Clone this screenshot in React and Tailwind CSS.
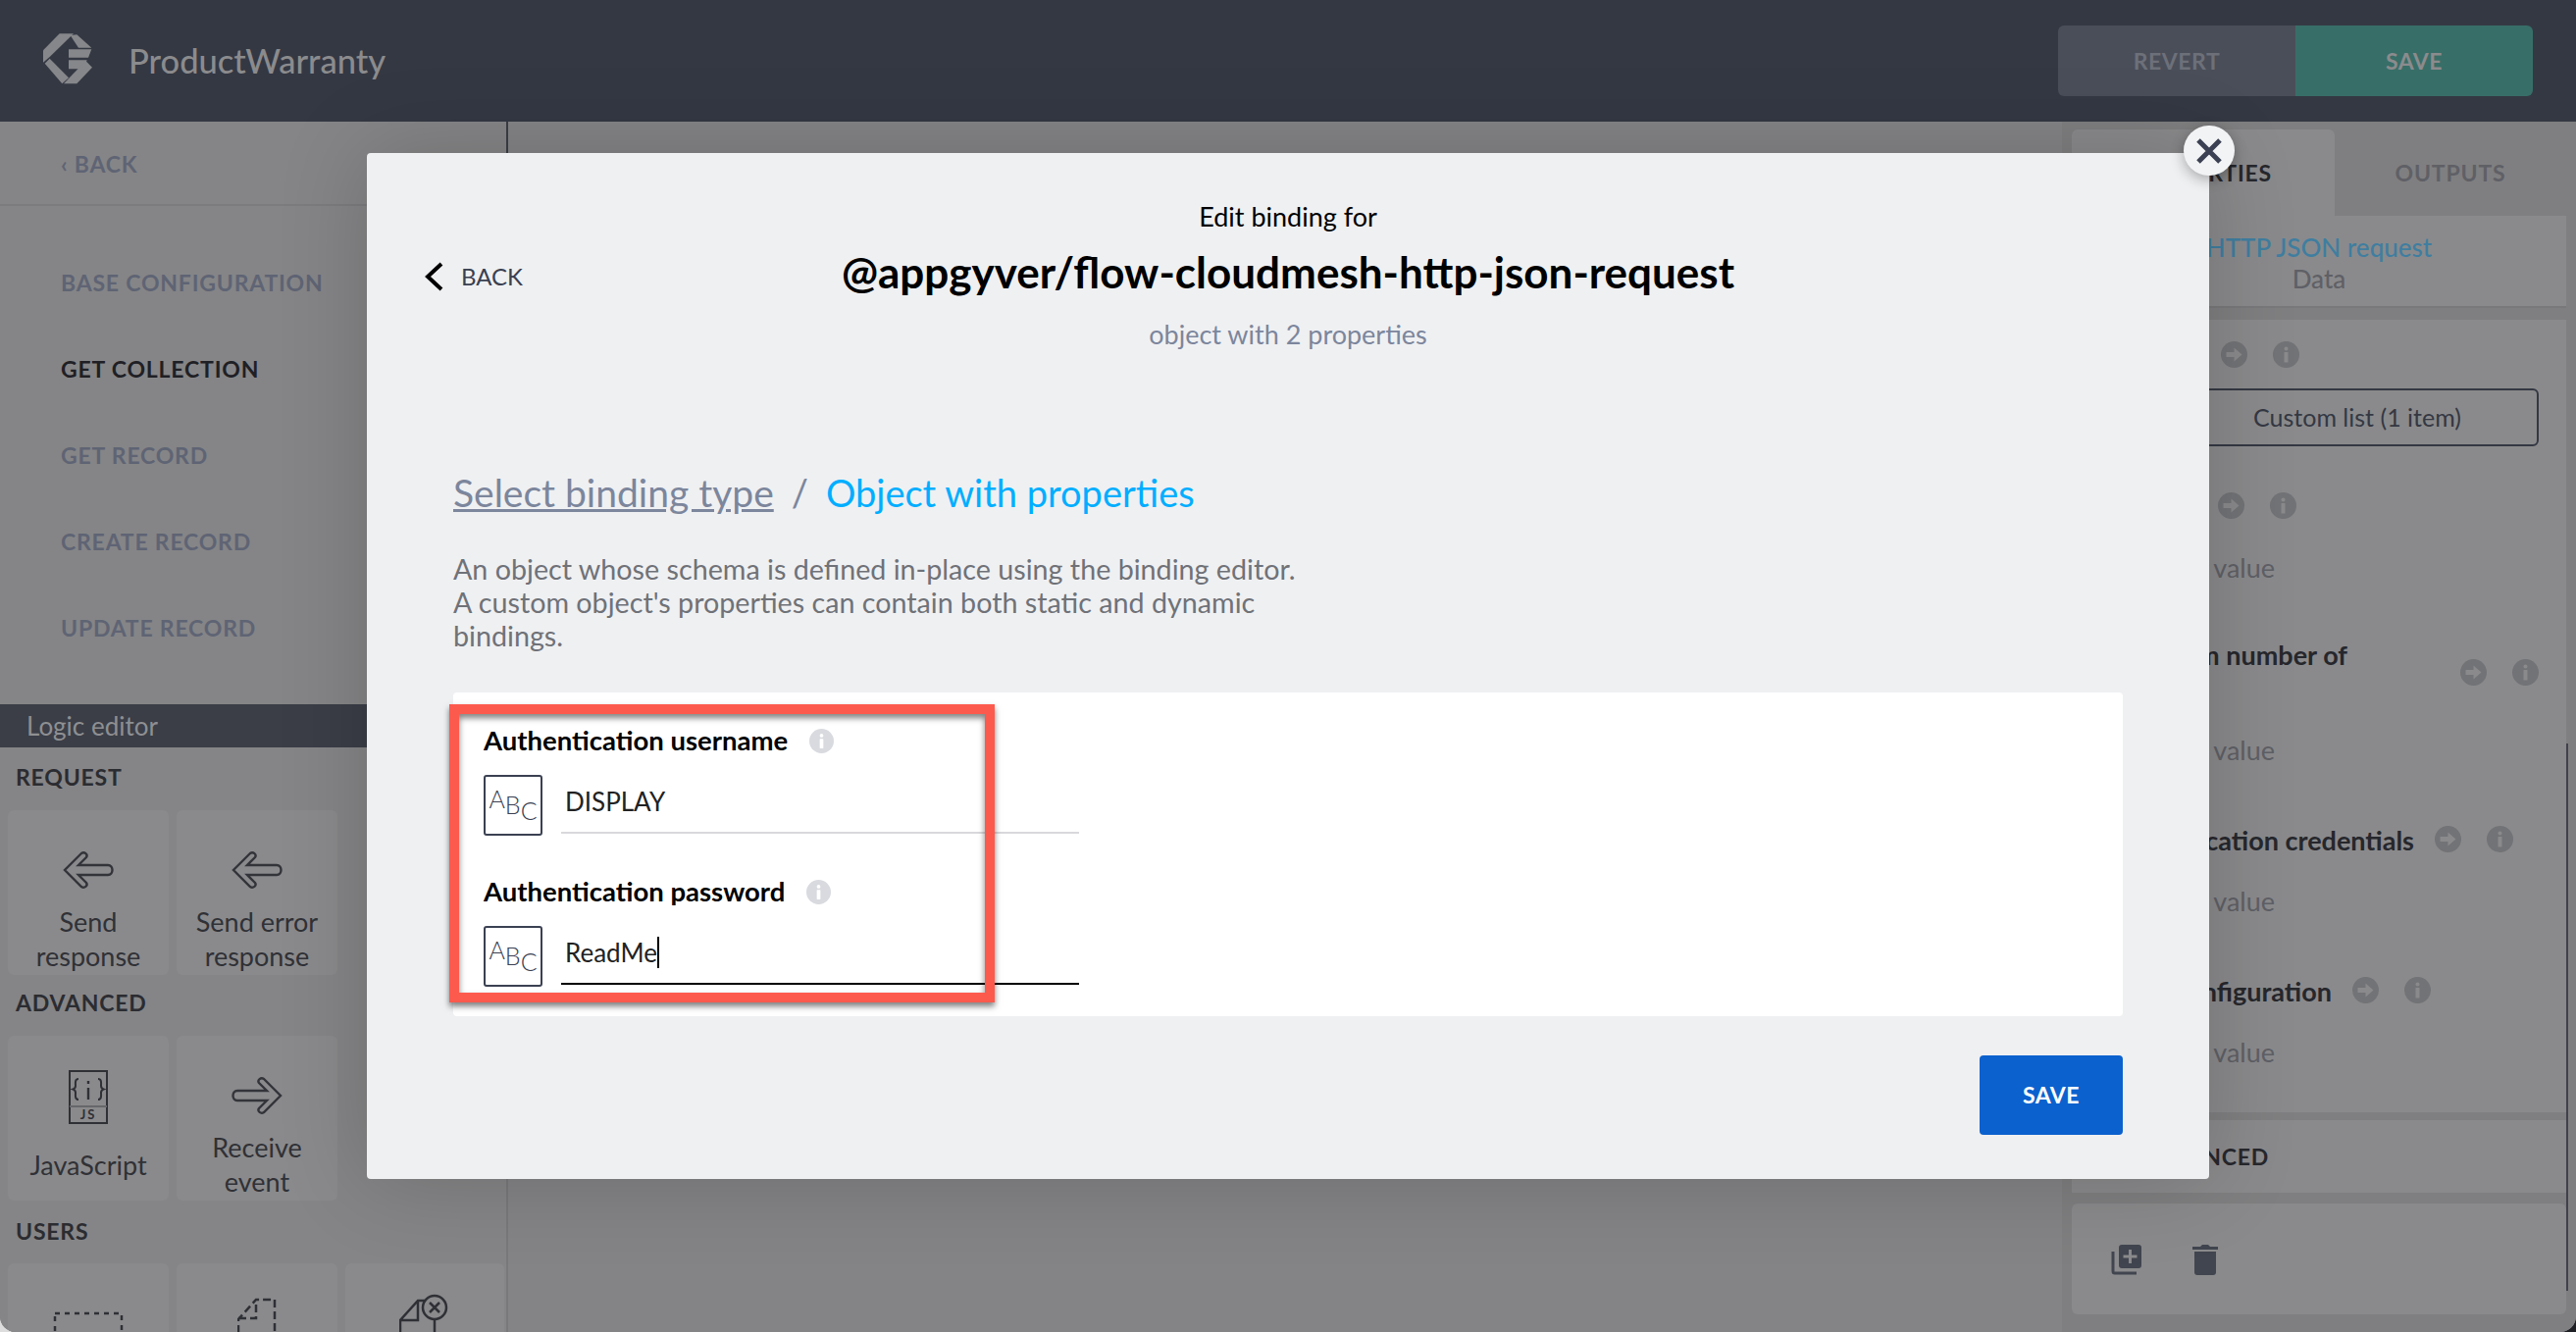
import React from 'react';

function Logo() {
    return (
        <svg width="80" height="80" viewBox="0 0 240 240" fill="#86878a">
            <polygon points="42,88 92,37 135,37 62,108 42,125" />
            <polygon points="125,42 145,40 190,80 150,80" />
            <polygon points="120,85 190,85 180,110 120,110" />
            <polygon points="120,118 176,118 166,145 120,145" />
            <polygon points="172,120 192,140 145,190 105,190" />
            <polygon points="47,128 62,113 120,172 100,190" />
        </svg>
    );
}

function InfoIcon({ bg = '#727376', fg = '#8a8a8c', size = 27 }) {
    return (
        <svg width={size} height={size} viewBox="0 0 27 27" className="shrink-0">
            <circle cx="13.5" cy="13.5" r="13.5" fill={bg} />
            <circle cx="13.5" cy="7.5" r="2" fill={fg} />
            <rect x="11.5" y="11" width="4" height="10.5" rx="0.5" fill={fg} />
        </svg>
    );
}

function ArrowCircle() {
    return (
        <svg width="27" height="27" viewBox="0 0 27 27" className="shrink-0">
            <circle cx="13.5" cy="13.5" r="13.5" fill="#727376" />
            <path d="M5.5 11h8V6.5l8 7-8 7V16h-8z" fill="#8a8a8c" />
        </svg>
    );
}

function OutlineArrow({ flip }) {
    return (
        <svg width="54" height="40" viewBox="0 0 54 40" fill="none" stroke="#33343a" strokeWidth="2.4" className={flip ? '-scale-x-100' : ''}>
            <path d="M20 3 L3 20 L20 37 C23 39 27 36 25 33 L17 25 H47 C53 25 53 15 47 15 H17 L25 7 C27 4 23 1 20 3 Z" />
        </svg>
    );
}

function JsIcon() {
    return (
        <svg width="40" height="55" viewBox="0 0 40 55" fill="none" stroke="#2f3036">
            <rect x="1" y="1" width="38" height="53" strokeWidth="2" />
            <line x1="1" y1="37" x2="39" y2="37" stroke="#66676b" strokeWidth="2" />
            <path d="M10 9 C6 9 7 14 7 16 C7 18 6 19 4.5 19.5 C6 20 7 21 7 23 C7 25 6 30 10 30 M30 9 C34 9 33 14 33 16 C33 18 34 19 35.5 19.5 C34 20 33 21 33 23 C33 25 34 30 30 30" strokeWidth="2" />
            <line x1="20" y1="18" x2="20" y2="30" strokeWidth="2.4" />
            <line x1="20" y1="11" x2="20" y2="14" strokeWidth="2.4" />
            <text x="20" y="50" textAnchor="middle" fill="#2f3036" stroke="none" fontSize="13" fontWeight="700" letterSpacing="2" fontFamily="Lato, sans-serif">JS</text>
        </svg>
    );
}

function PaletteCard({ children, className = 'w-[164px]', pad = 'pt-[41px]' }) {
    return (
        <div className={`${className} ${pad} shrink-0 h-[168px] rounded-md bg-[#8a8a8c] flex flex-col items-center text-center`}>
            {children}
        </div>
    );
}

function CardLabel({ lines, className = 'mt-[15px]' }) {
    return (
        <div className={`${className} text-[27px] leading-[35px] text-[#303136]`}>
            {lines.map(l => <div key={l}>{l}</div>)}
        </div>
    );
}

function NavItem({ active, children }) {
    return (
        <div className={`h-[88px] flex items-center text-[23px] font-bold tracking-[0.8px] ${active ? 'text-[#1f2025]' : 'text-[#5f6474]'}`}>
            {children}
        </div>
    );
}

function Sidebar() {
    return (
        <div className="w-[518px] shrink-0 bg-[#858587] flex flex-col">
            <div className="border-r-2 border-[#3b3e47]">
                <div className="h-[86px] border-b-2 border-[#7c7c7f] pl-[62px] pt-[2px] flex items-center text-[23px] font-bold tracking-[0.8px] text-[#5f6474]">
                    ‹ BACK
                </div>
                <div className="h-[508px] overflow-hidden pl-[62px] pt-[34px]">
                    <NavItem>BASE CONFIGURATION</NavItem>
                    <NavItem active>GET COLLECTION</NavItem>
                    <NavItem>GET RECORD</NavItem>
                    <NavItem>CREATE RECORD</NavItem>
                    <NavItem>UPDATE RECORD</NavItem>
                    <NavItem>DELETE RECORD</NavItem>
                </div>
            </div>
            <div className="h-[44px] bg-[#3b3e47] pl-[27px] flex items-center text-[26px] text-[#8e8f92]">
                Logic editor
            </div>
            <div className="px-[8px] flex-1 overflow-hidden border-r-2 border-[#79797b]">
                <div className="h-[60px] mb-[4px] pl-[8px] flex items-center text-[23px] font-bold tracking-[0.8px] text-[#2b2c31]">REQUEST</div>
                <div className="flex gap-[8px]">
                    <PaletteCard>
                        <OutlineArrow />
                        <CardLabel lines={['Send', 'response']} />
                    </PaletteCard>
                    <PaletteCard>
                        <OutlineArrow />
                        <CardLabel lines={['Send error', 'response']} />
                    </PaletteCard>
                </div>
                <div className="h-[56px] mb-[6px] pl-[8px] flex items-center text-[23px] font-bold tracking-[0.8px] text-[#2b2c31]">ADVANCED</div>
                <div className="flex gap-[8px]">
                    <PaletteCard pad="pt-[35px]">
                        <JsIcon />
                        <CardLabel lines={['JavaScript']} className="mt-[24px]" />
                    </PaletteCard>
                    <PaletteCard>
                        <OutlineArrow flip />
                        <CardLabel lines={['Receive', 'event']} />
                    </PaletteCard>
                </div>
                <div className="h-[62px] mb-[2px] pl-[8px] flex items-center text-[23px] font-bold tracking-[0.8px] text-[#2b2c31]">USERS</div>
                <div className="flex gap-[8px]">
                    <PaletteCard pad="pt-[49px]">
                        <svg width="72" height="40" fill="none" stroke="#2f3036" strokeWidth="2.5" strokeDasharray="5 5">
                            <rect x="2" y="2" width="68" height="36" />
                        </svg>
                    </PaletteCard>
                    <PaletteCard pad="pt-[35px]">
                        <svg width="40" height="50" fill="none" stroke="#2f3036" strokeWidth="2.5" strokeDasharray="8 4">
                            <path d="M1 48 V22 L19 2 H38 V48" />
                            <path d="M1 21 H19 V2" />
                        </svg>
                    </PaletteCard>
                    <PaletteCard className="w-[162px]" pad="pt-[31px]">
                        <svg width="50" height="54" fill="none" stroke="#2f3036" strokeWidth="2.5" className="ml-[-2px]">
                            <path d="M1 54 V27 L19 7 H26 M19 7 V27 H1" />
                            <circle cx="36" cy="14" r="12" />
                            <path d="M31 9l10 10M41 9l-10 10M36 26V54" />
                        </svg>
                    </PaletteCard>
                </div>
            </div>
        </div>
    );
}

function PropRow({ label, labelClass, className }) {
    return (
        <div className={`flex items-center gap-[26px] ${className}`}>
            <div className={`${labelClass} -mr-[5px] text-right text-[27px] font-bold leading-[34px] text-[#26272c] whitespace-nowrap`}>
                {label}
            </div>
            <ArrowCircle />
            <InfoIcon />
        </div>
    );
}

function StaticValue({ className = 'mt-[34px]' }) {
    return (
        <div className={`w-[177px] ${className} text-right text-[27px] leading-[30px] text-[#5f6066] whitespace-nowrap`}>
            Static value
        </div>
    );
}

function RightPanel() {
    return (
        <div className="w-[524px] shrink-0 bg-[#7f7f81] pl-[10px] pr-[10px] pt-[8px] flex flex-col">
            <div className="flex h-[88px]">
                <div className="w-[268px] rounded-t-md bg-[#8a8a8c] flex items-center justify-end pr-[64px] text-[23px] font-bold tracking-[0.8px] text-[#26272c]">
                    PROPERTIES
                </div>
                <div className="flex-1 flex items-center justify-center text-[23px] font-bold tracking-[0.8px] text-[#5f6066]">
                    OUTPUTS
                </div>
            </div>
            <div className="h-[94px] bg-[#8a8a8c] border-b-2 border-[#79797b] flex flex-col items-center pt-[16px] leading-[32px] text-[26px]">
                <div className="font-medium text-[#3f7ea0]">HTTP JSON request</div>
                <div className="font-medium text-[#5f6066]">Data</div>
            </div>
            <div className="mt-[12px] bg-[#8a8a8c] pl-[30px] pt-[20px] pb-[46px]">
                <PropRow label="Custom" labelClass="w-[101px] h-[30px]" />
                <div className="mt-[20px] ml-[76px] w-[370px] h-[59px] border-2 border-[#343843] rounded-md flex items-center justify-center text-[25px] text-[#343843]">
                    Custom list (1 item)
                </div>
                <PropRow label="Headers" labelClass="w-[98px] h-[30px]" className="mt-[45px]" />
                <StaticValue />
                <PropRow
                    label={<>
                        <div className="w-[251px]">Maximum number of</div>
                        <div className="text-left">records</div>
                    </>}
                    labelClass="w-[345px] h-[68px]"
                    className="mt-[57px]"
                />
                <StaticValue className="mt-[31px]" />
                <PropRow label="Authentication credentials" labelClass="w-[319px] h-[30px]" className="mt-[60px]" />
                <StaticValue />
                <PropRow label="API configuration" labelClass="w-[235px] h-[30px]" className="mt-[60px]" />
                <StaticValue />
            </div>
            <div className="mt-[8px] h-[74px] bg-[#8a8a8c] pl-[30px] flex items-center">
                <div className="w-[171px] text-right text-[23px] font-bold tracking-[0.8px] text-[#26272c]">ADVANCED</div>
            </div>
            <div className="mt-[11px] h-[113px] rounded-md bg-[#8a8a8c] pl-[40px] flex items-center gap-[51px]">
                <svg width="32" height="32" viewBox="0 0 32 32">
                    <path d="M2 8v20a2 2 0 0 0 2 2h22" fill="none" stroke="#41454f" strokeWidth="3" />
                    <rect x="8" y="1" width="23" height="24" rx="3" fill="#41454f" />
                    <path d="M19.5 6v14M12.5 13h14" stroke="#8a8a8c" strokeWidth="3" />
                </svg>
                <svg width="26" height="32" viewBox="0 0 26 32" fill="#41454f">
                    <path d="M0 3h8l2-2h6l2 2h8v3H0z" />
                    <path d="M2 8h22v21a3 3 0 0 1-3 3H5a3 3 0 0 1-3-3z" />
                </svg>
            </div>
        </div>
    );
}

function AbcBox() {
    return (
        <div className="w-[60px] h-[62px] shrink-0 border-2 border-[#3b4152] rounded-[3px] flex items-center justify-center text-[25px] font-light text-[#3b4152]">
            <span className="-translate-y-[6px]">A</span>
            <span>B</span>
            <span className="translate-y-[6px]">C</span>
        </div>
    );
}

function Field({ label, value, underline, caret, className }) {
    return (
        <div className={className}>
            <div className="flex items-center gap-[22px] h-[32px] text-[27.5px] font-bold text-black leading-[32px]">
                {label}
                <InfoIcon bg="#d8dadf" fg="#ffffff" size={25} />
            </div>
            <div className="mt-[19px] flex gap-[19px]">
                <AbcBox />
                <div className={`w-[528px] h-[60px] border-b-2 ${underline} pl-[4px] pt-[11px]`}>
                    <div className="flex items-center h-[32px] text-[26px] text-[#222] leading-[32px]">
                        {value}
                        {caret && <span className="w-[2px] h-[32px] bg-black" />}
                    </div>
                </div>
            </div>
        </div>
    );
}

function BindingModal() {
    return (
        <div className="absolute left-[374px] top-[156px] w-[1878px] h-[1046px] rounded-[4px] bg-[#eff0f2] shadow-[0_0_90px_rgba(0,0,0,0.18)] px-[88px] pt-[50px] flex flex-col">
            <button className="absolute -right-[26px] -top-[28px] w-[52px] h-[51px] rounded-full bg-[#f2f3f4] shadow-[0_4px_14px_rgba(0,0,0,0.3)] flex items-center justify-center">
                <svg width="26" height="26" viewBox="0 0 26 26" stroke="#3b4152" strokeWidth="5">
                    <path d="M2 2l22 22M24 2L2 24" />
                </svg>
            </button>
            <div className="absolute left-[58px] top-[108px] flex items-center gap-[18px]">
                <svg width="20" height="30" viewBox="0 0 20 30" fill="none" stroke="#000" strokeWidth="4">
                    <path d="M18 2L4 15l14 13" />
                </svg>
                <span className="text-[24px] text-[#3a4050]">BACK</span>
            </div>

            <div className="text-center text-[27px] leading-[30px] text-black">Edit binding for</div>
            <div className="mt-[15px] text-center text-[44px] font-bold leading-[52px] text-black">@appgyver/flow-cloudmesh-http-json-request</div>
            <div className="mt-[22px] text-center text-[27px] leading-[32px] text-[#7c869c]">object with 2 properties</div>

            <div className="mt-[123px] h-[44px] flex items-center leading-[44px]">
                <span className="underline text-[39px] text-[#7c869c]">Select binding type</span>
                <span className="mx-[18px] text-[38px] text-[#7c869c]">/</span>
                <span className="text-[38px] text-[#00aeff]">Object with properties</span>
            </div>
            <div className="mt-[39px] w-[960px] text-[28.7px] leading-[34px] text-[#6f7278]">
                An object whose schema is defined in-place using the binding editor.<br />
                A custom object's properties can contain both static and dynamic<br />
                bindings.
            </div>

            <div className="relative mt-[41px] h-[330px] rounded-[4px] bg-white pl-[31px] pt-[33px]">
                <Field label="Authentication username" value="DISPLAY" underline="border-[#d9d9dc]" />
                <Field label="Authentication password" value="ReadMe" underline="border-black" caret className="mt-[41px]" />
                <div className="absolute -left-[4px] top-[12px] w-[556px] h-[304px] border-[10px] border-[#fd5a4e] shadow-[0_4px_6px_rgba(0,0,0,0.5),inset_0_4px_6px_rgba(0,0,0,0.5)]" />
            </div>

            <button className="mt-[40px] self-end w-[146px] h-[81px] rounded-[4px] bg-[#0b61ce] text-[23px] font-bold tracking-[0.5px] text-white">
                SAVE
            </button>
        </div>
    );
}

export default function App() {
    return (
        <div className="relative w-[2626px] h-[1358px] overflow-hidden bg-[linear-gradient(to_right,#dddddd_50%,#1e2026_50%)] font-[Lato,sans-serif]">
            <div className="w-full h-full rounded-b-[16px] overflow-hidden flex flex-col bg-[#848486]">
                <div className="h-[124px] shrink-0 bg-[#343843] pl-[30px] pr-[44px] flex items-center">
                    <Logo />
                    <div className="ml-[21px] text-[34.5px] font-medium text-[#8b8b8d]">ProductWarranty</div>
                    <div className="ml-auto flex text-[23px] font-bold tracking-[0.5px]">
                        <div className="w-[242px] h-[72px] rounded-l-md bg-[#4a4e59] flex items-center justify-center text-[#6d7079]">REVERT</div>
                        <div className="w-[242px] h-[72px] rounded-r-md bg-[#386e68] flex items-center justify-center text-[#8b8b8d]">SAVE</div>
                    </div>
                </div>
                <div className="flex-1 flex min-h-0">
                    <Sidebar />
                    <div className="flex-1 bg-[#848486]" />
                    <RightPanel />
                </div>
            </div>
            <div className="absolute left-[2616px] top-[758px] w-[2px] h-[558px] bg-[#3f424c]" />
            <BindingModal />
        </div>
    );
}
